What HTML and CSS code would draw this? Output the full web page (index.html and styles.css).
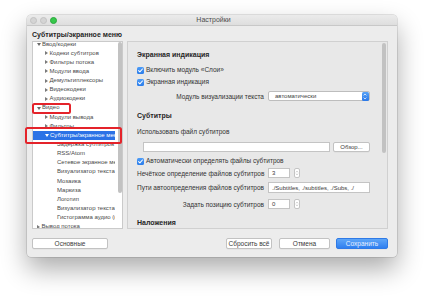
FILE: index.html
```html
<!DOCTYPE html>
<html lang="ru">
<head>
<meta charset="utf-8">
<title>Настройки</title>
<link rel="stylesheet" href="styles.css">
</head>
<body>
<div class="window">
  <div class="titlebar">
    <div class="lights"><span class="light"></span><span class="light"></span><span class="light green"></span></div>
    <div class="title">Настройки</div>
    <div></div>
  </div>
  <div class="content">
    <div class="header">Субтитры/экранное меню</div>
    <div class="main">
      <div class="tree">
        <div class="tree-list">
          <div class="row l0"><span class="tri down"></span>Ввод/кодеки</div>
          <div class="row l1"><span class="tri"></span>Кодеки субтитров</div>
          <div class="row l1"><span class="tri"></span>Фильтры потока</div>
          <div class="row l1"><span class="tri"></span>Модули ввода</div>
          <div class="row l1"><span class="tri"></span>Демультиплексоры</div>
          <div class="row l1"><span class="tri"></span>Видеокодеки</div>
          <div class="row l1"><span class="tri"></span>Аудиокодеки</div>
          <div class="row l0"><span class="tri down"></span>Видео</div>
          <div class="row l1"><span class="tri"></span>Модули вывода</div>
          <div class="row l1"><span class="tri"></span>Фильтры</div>
          <div class="row l1 selected"><span class="tri down"></span>Субтитры/экранное меню</div>
          <div class="row l2">Задержка субтитров</div>
          <div class="row l2">RSS/Atom</div>
          <div class="row l2">Сетевое экранное меню</div>
          <div class="row l2">Визуализатор текста для</div>
          <div class="row l2">Мозаика</div>
          <div class="row l2">Маркиза</div>
          <div class="row l2">Логотип</div>
          <div class="row l2">Визуализатор текста</div>
          <div class="row l2">Гистограмма аудио (ы</div>
          <div class="row l0"><span class="tri"></span>Вывод потока</div>
        </div>
        <div class="scroll-thumb tree-thumb"></div>
        <div class="mark mark-video"></div>
        <div class="mark mark-subs"></div>
      </div>
      <div class="panel">
        <div class="section-title">Экранная индикация</div>
        <div class="check-row first"><span class="checkbox"><svg viewBox="0 0 8 8" width="7" height="7"><path d="M1.8 4.1 L3.3 5.6 L6.2 2.3" fill="none" stroke="#fff" stroke-width="1.2" stroke-linecap="round" stroke-linejoin="round"/></svg></span>Включить модуль «Слои»</div>
        <div class="check-row tight"><span class="checkbox"><svg viewBox="0 0 8 8" width="7" height="7"><path d="M1.8 4.1 L3.3 5.6 L6.2 2.3" fill="none" stroke="#fff" stroke-width="1.2" stroke-linecap="round" stroke-linejoin="round"/></svg></span>Экранная индикация</div>
        <div class="form-row select-row">
          <span class="label">Модуль визуализации текста</span>
          <div class="select"><span class="select-text">автоматически</span><span class="select-btn"><svg viewBox="0 0 6 10" width="6" height="9"><path d="M1.5 3.8 L3 2.2 L4.5 3.8 M1.5 6.2 L3 7.8 L4.5 6.2" fill="none" stroke="#fff" stroke-width="0.8"/></svg></span></div>
        </div>
        <div class="section-title subs">Субтитры</div>
        <div class="plain-row">Использовать файл субтитров</div>
        <div class="file-row">
          <div class="field file-field"></div>
          <div class="btn browse">Обзор...</div>
        </div>
        <div class="check-row auto"><span class="checkbox"><svg viewBox="0 0 8 8" width="7" height="7"><path d="M1.8 4.1 L3.3 5.6 L6.2 2.3" fill="none" stroke="#fff" stroke-width="1.2" stroke-linecap="round" stroke-linejoin="round"/></svg></span>Автоматически определять файлы субтитров</div>
        <div class="form-row fuzzy">
          <span class="label">Нечёткое определение файлов субтитров</span>
          <div class="spin"><div class="field small">3</div><span class="stepper"><svg viewBox="0 0 6 10" width="6" height="10"><path d="M1.7 3.9 L3 2.5 L4.3 3.9 M1.7 6.1 L3 7.5 L4.3 6.1" fill="none" stroke="#777" stroke-width="0.7"/></svg></span></div>
        </div>
        <div class="form-row paths">
          <span class="label">Пути автоопределения файлов субтитров</span>
          <div class="field wide">./Subtitles, ./subtitles, ./Subs, ./</div>
        </div>
        <div class="form-row position">
          <span class="label">Задать позицию субтитров</span>
          <div class="spin"><div class="field small">0</div><span class="stepper"><svg viewBox="0 0 6 10" width="6" height="10"><path d="M1.7 3.9 L3 2.5 L4.3 3.9 M1.7 6.1 L3 7.5 L4.3 6.1" fill="none" stroke="#777" stroke-width="0.7"/></svg></span></div>
        </div>
        <div class="section-title overlays">Наложения</div>
        <div class="scroll-thumb panel-thumb"></div>
      </div>
    </div>
    <div class="footer">
      <div class="btn basic">Основные</div>
      <div class="spacer"></div>
      <div class="btn reset">Сбросить всё</div>
      <div class="btn cancel">Отмена</div>
      <div class="btn save">Сохранить</div>
    </div>
  </div>
</div>
</body>
</html>
```

FILE: styles.css
```css
* { box-sizing: border-box; }
html, body { margin: 0; }
body {
  width: 424px;
  height: 296px;
  overflow: hidden;
  background: #fff;
  padding: 15px 0 0 27px;
  font-family: "Liberation Sans", Arial, sans-serif;
  color: #333;
}
.window {
  width: 370px;
  height: 242px;
  background: #ececec;
  border-radius: 4px;
  box-shadow: 0 0 0 0.5px rgba(0,0,0,0.2), 0 12px 26px rgba(0,0,0,0.33);
  display: flex;
  flex-direction: column;
}
.titlebar {
  height: 11px;
  display: grid;
  grid-template-columns: 1fr auto 1fr;
  align-items: center;
  padding-left: 3px;
  background: linear-gradient(#ebebeb, #dedede);
  border-bottom: 1px solid #c8c8c8;
  border-radius: 4px 4px 0 0;
}
.lights { display: flex; gap: 3px; }
.light {
  width: 7px; height: 7px; border-radius: 50%;
  background: #d4d4d4; border: 0.5px solid #c2c2c2;
}
.light.green { background: #37c84b; border-color: #2aa83c; }
.title { font-size: 7px; color: #4c4c4c; line-height: 10px; }
.content {
  flex: 1;
  padding: 4px 9px 8px 5px;
  display: flex;
  flex-direction: column;
}
.header {
  font-size: 7px; font-weight: bold; line-height: 9px; height: 9px;
  margin-bottom: 2px; color: #262626;
}
.main { display: flex; gap: 4px; height: 188px; }
.tree {
  position: relative;
  width: 91px;
  flex: none;
  background: #fff;
  border: 1px solid #cacaca;
}
.tree-list {
  height: 100%;
  overflow: hidden;
}
.tree-list .row:first-child { margin-top: -2.5px; }
.row {
  height: 9.15px;
  line-height: 9.15px;
  font-size: 6px;
  color: #4a4a4a;
  white-space: nowrap;
  overflow: hidden;
  display: flex;
  align-items: center;
  margin-right: 7px;
}
.row.l0 { padding-left: 4px; }
.row.l1 { padding-left: 12px; }
.row.l2 { padding-left: 24px; }
.tri {
  width: 0; height: 0; flex: none;
  border-left: 3px solid #7a7a7a;
  border-top: 2px solid transparent;
  border-bottom: 2px solid transparent;
  margin-right: 1.5px;
}
.tri.down {
  border-left: 2px solid transparent;
  border-right: 2px solid transparent;
  border-top: 3px solid #6a6a6a;
  border-bottom: 0;
  margin-right: 1px;
}
.row.selected { background: #2b72e6; color: #fff; }
.row.selected .tri.down { border-top-color: #fff; }
.scroll-thumb {
  position: absolute;
  width: 3.5px;
  border-radius: 2px;
  background: #c2c2c2;
}
.tree-thumb { right: 0.5px; top: 0; height: 151px; }
.mark {
  position: absolute;
  border: 2px solid #e4232a;
  border-radius: 2.5px;
}
.mark-video { left: -1px; top: 61px; width: 39px; height: 11px; }
.mark-subs { left: -8px; top: 85px; width: 97px; height: 17px; }
.panel {
  position: relative;
  flex: 1;
  background: #e8e8e8;
  border: 1px solid #d0d0d0;
  overflow: hidden;
  padding: 8px 0 0 9px;
  font-size: 6.5px;
  color: #333;
}
.section-title { font-size: 7px; font-weight: bold; line-height: 10px; height: 10px; color: #262626; }
.section-title.subs { margin-top: 10px; }
.section-title.overlays { margin-top: 9px; }
.check-row {
  display: flex; align-items: center; gap: 2px;
  height: 10px; line-height: 10px;
}
.check-row.first { margin-top: 5px; }
.check-row.tight { margin-top: 2px; }
.check-row.auto { margin-top: 4px; }
.checkbox {
  width: 7px; height: 7px; border-radius: 1.5px;
  background: linear-gradient(#4e9cf6, #2a7cea);
  display: inline-flex; align-items: center; justify-content: center;
  flex: none;
}
.checkbox svg { display: block; }
.form-row {
  display: grid;
  grid-template-columns: 127px auto;
  column-gap: 4px;
  align-items: center;
  height: 10px;
}
.form-row .label { text-align: right; white-space: nowrap; }
.select-row { margin-top: 4px; }
.select {
  width: 102px; height: 10px;
  background: #fff;
  border: 0.5px solid #bdbdbd;
  border-radius: 2px;
  display: flex; align-items: center;
  font-size: 6px; color: #444;
}
.select-text { flex: 1; padding-left: 6px; }
.select-btn {
  width: 7px; height: 9px; margin-right: 0.5px;
  background: linear-gradient(#57a2f7, #2a78e8);
  border-radius: 1.5px;
  display: flex; align-items: center; justify-content: center;
}
.plain-row { margin-top: 6px; height: 10px; line-height: 10px; }
.file-row {
  display: flex; gap: 3px;
  margin-top: 5px; margin-left: 6px;
  height: 10px;
}
.field {
  height: 10px;
  background: #fff;
  border: 0.5px solid #c4c4c4;
  font-size: 6px;
  line-height: 9px;
  padding-left: 3px;
  color: #3a3a3a;
  white-space: nowrap;
  overflow: hidden;
}
.file-field { width: 187px; }
.btn {
  height: 10px;
  background: #fff;
  border: 0.5px solid #c2c2c2;
  border-radius: 2px;
  font-size: 6px;
  line-height: 9px;
  text-align: center;
  color: #3a3a3a;
  box-shadow: 0 0.5px 0 rgba(0,0,0,0.06);
}
.browse { width: 37px; }
.fuzzy { margin-top: 2px; }
.paths { margin-top: 4px; height: 11px; }
.paths .field { height: 11px; line-height: 10px; }
.position { margin-top: 6px; }
.spin { display: flex; align-items: center; gap: 4px; }
.field.small { width: 22px; }
.field.wide { width: 102px; }
.stepper {
  width: 6px; height: 10px;
  background: #fff;
  border: 0.5px solid #c4c4c4;
  border-radius: 2px;
  display: flex; align-items: center; justify-content: center;
}
.stepper svg { display: block; }
.panel-thumb { right: 1.5px; top: 1px; height: 110px; }
.footer {
  display: flex;
  margin-top: 9px;
  height: 11px;
}
.footer .btn { height: 11px; line-height: 10px; font-size: 6.5px; }
.spacer { flex: 1; }
.basic { width: 76px; }
.reset { width: 46px; margin-right: 7px; }
.cancel { width: 51px; margin-right: 6px; }
.save {
  width: 52px;
  background: linear-gradient(#5ea6f8, #2f7ff0);
  border-color: #2f7ae6;
  color: #e8f1ff;
}
```
